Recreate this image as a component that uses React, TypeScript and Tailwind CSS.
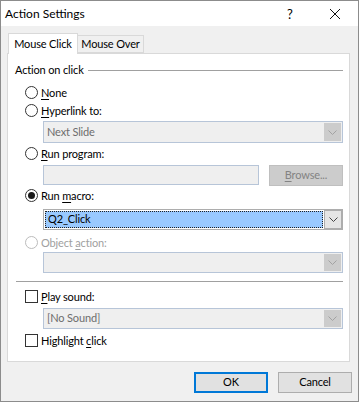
import React from "react";

const FONT = { fontFamily: 'Lato, "Noto Sans", "Liberation Sans", sans-serif' };

function U({ children }: { children: React.ReactNode }) {
  return <span className="underline underline-offset-[2px] decoration-[1px]">{children}</span>;
}

function Radio({ checked, disabled }: { checked?: boolean; disabled?: boolean }) {
  return (
    <div
      className={
        "w-[13px] h-[13px] rounded-full border bg-white flex items-center justify-center shrink-0 " +
        (disabled ? "border-[#bcbcbc]" : "border-[#333333]")
      }
    >
      {checked && <div className="w-[7px] h-[7px] rounded-full bg-[#1a1a1a]" />}
    </div>
  );
}

function Check() {
  return <div className="w-[13px] h-[13px] border border-[#333333] bg-white shrink-0" />;
}

function Chevron({ color }: { color: string }) {
  return (
    <svg width="9" height="5" viewBox="0 0 9 5">
      <path d="M0.5 0.5 L4.5 4.5 L8.5 0.5" fill="none" stroke={color} strokeWidth="1" />
    </svg>
  );
}

function DisabledCombo({ text }: { text?: string }) {
  return (
    <div className="ml-[28px] w-[300px] h-[21px] border border-[#b7c5d8] bg-[#efefef] flex items-center">
      <div className="flex-1 pl-[3px] text-[#6d6d6d] whitespace-nowrap">{text}</div>
      <div className="w-[17px] h-[17px] mr-[1px] bg-[#cccccc] flex items-center justify-center">
        <Chevron color="#a2a2a2" />
      </div>
    </div>
  );
}

function RadioRow({
  checked,
  disabled,
  children,
  className,
}: {
  checked?: boolean;
  disabled?: boolean;
  children: React.ReactNode;
  className?: string;
}) {
  return (
    <div className={"h-[16px] flex items-center ml-[10px] " + (className || "")}>
      <Radio checked={checked} disabled={disabled} />
      <span className={"ml-[3px] leading-none whitespace-nowrap " + (disabled ? "text-[#a0a0a0]" : "text-black")}>
        {children}
      </span>
    </div>
  );
}

export default function App() {
  return (
    <div
      style={FONT}
      className="w-[359px] h-[402px] border border-[#8c8c8c] bg-[#f0f0f0] flex flex-col text-[11px] tracking-[-0.15px] text-black overflow-hidden"
    >
      {/* Title bar */}
      <div className="h-[25px] bg-white flex items-center relative">
        <span className="ml-[4px] text-[12px] tracking-normal whitespace-nowrap">Action Settings</span>
        <span className="absolute left-[286px] top-[4px] text-[13px]">?</span>
        <svg className="absolute left-[328px] top-[7px]" width="12" height="12" viewBox="0 0 12 12">
          <path d="M1 1 L11 11 M11 1 L1 11" stroke="#111" strokeWidth="1" />
        </svg>
      </div>

      <div className="px-[6px] flex flex-col">
        {/* Tabs */}
        <div className="mt-[7px] h-[21px] flex items-end -mb-[1px] relative z-10 pl-[1px]">
          <div className="w-[70px] h-[21px] bg-white border border-b-0 border-[#d9d9d9] flex items-center justify-center whitespace-nowrap">
            Mouse Click
          </div>
          <div className="w-[66px] h-[18px] mb-[1px] bg-[#f0f0f0] border border-l-0 border-[#d9d9d9] flex items-center justify-center whitespace-nowrap">
            Mouse Over
          </div>
        </div>

        {/* Panel */}
        <div className="w-[343px] h-[309px] bg-white border border-[#d9d9d9] flex flex-col pl-[7px] pr-[6px]">
          <div className="mt-[8px] h-[16px] flex items-center">
            <span className="whitespace-nowrap">Action on click</span>
            <div className="flex-1 h-px bg-[#a0a0a0] ml-[4px]" />
          </div>

          <RadioRow className="mt-[6px]">
            <U>N</U>one
          </RadioRow>

          <RadioRow className="mt-[2px]">
            <U>H</U>yperlink to:
          </RadioRow>
          <div className="mt-[3px]">
            <div className="ml-[28px] w-[300px] h-[22px] border border-[#b7c5d8] bg-[#efefef] flex items-center">
              <div className="flex-1 pl-[3px] text-[#6d6d6d]">Next Slide</div>
              <div className="w-[17px] h-[18px] mr-[1px] bg-[#cccccc] flex items-center justify-center">
                <Chevron color="#a2a2a2" />
              </div>
            </div>
          </div>

          <RadioRow className="mt-[2px]">
            <U>R</U>un program:
          </RadioRow>
          <div className="mt-[4px] h-[21px] flex items-start ml-[28px]">
            <div className="w-[216px] h-[20px] border border-[#b7c5d8] bg-[#efefef]" />
            <div className="ml-[10px] w-[74px] h-[21px] border border-[#bfbfbf] bg-[#cccccc] flex items-center justify-center text-[#838383]">
              <span>
                <U>B</U>rowse...
              </span>
            </div>
          </div>

          <RadioRow checked className="mt-[1px]">
            Run <U>m</U>acro:
          </RadioRow>
          <div className="mt-[6px] ml-[28px] w-[300px] h-[21px] border border-[#adadad] bg-white flex items-center">
            <div className="ml-[1px] w-[278px] h-[17px] bg-[#99c9ff] border border-dotted border-[#222] flex items-center pl-[2px]">
              Q2_Click
            </div>
            <div className="ml-[1px] w-[18px] h-[19px] border border-[#adadad] bg-[#e5e5e5] flex items-center justify-center">
              <Chevron color="#444" />
            </div>
          </div>

          <RadioRow disabled className="mt-[4px]">
            Object <U>a</U>ction:
          </RadioRow>
          <div className="mt-[2px]">
            <DisabledCombo />
          </div>

          <div className="mt-[8px] h-px bg-[#a0a0a0] ml-[1px]" />

          <div className="mt-[6px] h-[16px] flex items-center ml-[10px]">
            <Check />
            <span className="ml-[3px] leading-none whitespace-nowrap">
              <U>P</U>lay sound:
            </span>
          </div>
          <div className="mt-[4px]">
            <DisabledCombo text="[No Sound]" />
          </div>

          <div className="mt-[3px] h-[16px] flex items-center ml-[10px]">
            <Check />
            <span className="ml-[3px] leading-none whitespace-nowrap">
              Highlight <U>c</U>lick
            </span>
          </div>
        </div>

        {/* Buttons */}
        <div className="mt-[10px] flex justify-end gap-[10px]">
          <div className="w-[74px] h-[21px] border-2 border-[#0078d7] bg-[#e1e1e1] flex items-center justify-center">
            OK
          </div>
          <div className="w-[74px] h-[21px] border border-[#adadad] bg-[#e1e1e1] flex items-center justify-center">
            Cancel
          </div>
        </div>
      </div>
    </div>
  );
}
